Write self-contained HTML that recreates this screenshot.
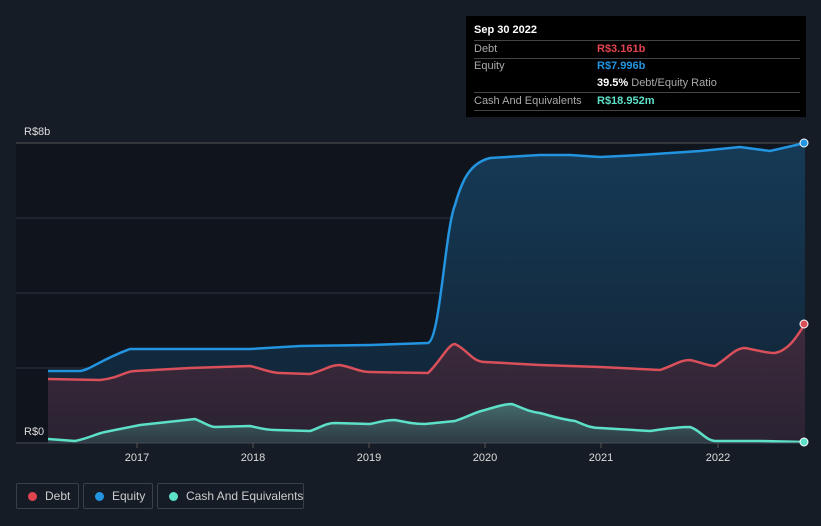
<!DOCTYPE html><html><head><style>
body{margin:0;width:821px;height:526px;background:#161c26;font-family:"Liberation Sans",sans-serif;overflow:hidden;position:relative}
.tip{position:absolute;left:466px;top:16px;width:340px;height:101px;background:#000;color:#fff;font-size:11px}
.tip .r{position:absolute;left:8px;width:326px;border-bottom:1px solid #444;height:17px;line-height:17px;color:#aaa}
.tip span{position:absolute;left:123px;font-weight:bold}
.leg{position:absolute;top:483px;height:26px;border:1px solid #3a404a;border-radius:2px;color:#ccc;font-size:12px;line-height:25px;box-sizing:border-box;white-space:nowrap;overflow:hidden}
.leg i{display:inline-block;width:9px;height:9px;border-radius:50%;margin:0 8px 0 11px;vertical-align:-1px}
</style></head><body>
<svg width="821" height="526" style="position:absolute;left:0;top:0">
<defs>
<linearGradient id="eq" x1="0" y1="0" x2="0" y2="1"><stop offset="0" stop-color="#163a56"/><stop offset="1" stop-color="#112233"/></linearGradient>
<linearGradient id="db" x1="0" y1="0" x2="0" y2="1"><stop offset="0" stop-color="#3e2b3d"/><stop offset="1" stop-color="#2a2232"/></linearGradient>
<linearGradient id="cs" x1="0" y1="0" x2="0" y2="1"><stop offset="0" stop-color="#446a6a"/><stop offset="1" stop-color="#2e3a44"/></linearGradient>
</defs>
<rect x="16" y="143" width="789" height="300" fill="#10141c"/>
<g stroke="#2c3440" stroke-width="1"><line x1="16" y1="143" x2="805" y2="143" stroke="#555"/><line x1="16" y1="218" x2="805" y2="218"/><line x1="16" y1="293" x2="805" y2="293"/><line x1="16" y1="368" x2="805" y2="368"/></g>
<path d="M48,371 L80,371 C90,370 100,360 130,349 L190,349 L250,349 L300,346 L370,345 L428,343 C440,340 445,230 455,205 C462,180 470,163 490,158 L540,155 L570,155 L600,157 L640,155 L700,151 L740,147 L770,151 L805,143 L805,443 L48,443Z" fill="url(#eq)"/>
<path d="M48,379 L100,380 C120,378 125,371 135,371 L190,368 L250,366 C260,368 270,373 280,373 L310,374 C325,370 330,365 340,365 C355,368 360,372 370,372 L428,373 C440,362 448,344 455,344 C468,350 472,362 485,362 L540,365 L600,367 L660,370 C675,365 680,360 690,360 C700,362 708,366 715,366 C728,358 735,348 745,348 C757,350 765,353 775,353 C790,350 798,334 805,324 L805,443 L48,443Z" fill="url(#db)"/>
<path d="M48,439 L75,441 C90,438 95,434 105,432 L140,425 L195,419 C205,423 210,427 215,427 L250,426 C260,428 265,430 275,430 L310,431 C320,428 325,423 335,423 L370,424 C380,422 385,420 395,420 C410,423 415,424 425,424 L455,421 C470,416 475,412 485,410 C495,407 505,404 512,404 C525,409 530,412 540,413 C555,417 560,419 575,421 C585,425 590,428 600,428 L650,431 C665,429 675,427 690,427 C700,430 705,440 715,441 L760,441 L805,442 L805,443 L48,443Z" fill="url(#cs)"/>
<g fill="none" stroke-width="2.5">
<path d="M48,371 L80,371 C90,370 100,360 130,349 L190,349 L250,349 L300,346 L370,345 L428,343 C440,340 445,230 455,205 C462,180 470,163 490,158 L540,155 L570,155 L600,157 L640,155 L700,151 L740,147 L770,151 L805,143" stroke="#2394df"/>
<path d="M48,379 L100,380 C120,378 125,371 135,371 L190,368 L250,366 C260,368 270,373 280,373 L310,374 C325,370 330,365 340,365 C355,368 360,372 370,372 L428,373 C440,362 448,344 455,344 C468,350 472,362 485,362 L540,365 L600,367 L660,370 C675,365 680,360 690,360 C700,362 708,366 715,366 C728,358 735,348 745,348 C757,350 765,353 775,353 C790,350 798,334 805,324" stroke="#d9505a"/>
<path d="M48,439 L75,441 C90,438 95,434 105,432 L140,425 L195,419 C205,423 210,427 215,427 L250,426 C260,428 265,430 275,430 L310,431 C320,428 325,423 335,423 L370,424 C380,422 385,420 395,420 C410,423 415,424 425,424 L455,421 C470,416 475,412 485,410 C495,407 505,404 512,404 C525,409 530,412 540,413 C555,417 560,419 575,421 C585,425 590,428 600,428 L650,431 C665,429 675,427 690,427 C700,430 705,440 715,441 L760,441 L805,442" stroke="#5de0c8"/>
</g>
<line x1="16" y1="443" x2="805" y2="443" stroke="#444c58"/>
<g stroke="#555"><line x1="137" y1="443" x2="137" y2="448"/><line x1="253" y1="443" x2="253" y2="448"/><line x1="369" y1="443" x2="369" y2="448"/><line x1="485" y1="443" x2="485" y2="448"/><line x1="601" y1="443" x2="601" y2="448"/><line x1="718" y1="443" x2="718" y2="448"/></g>
<circle cx="804" cy="143" r="4" fill="#2394df" stroke="#fff"/><circle cx="804" cy="324" r="4" fill="#d9505a" stroke="#fff"/><circle cx="804" cy="442" r="4" fill="#5de0c8" stroke="#fff"/>
<g fill="#ddd" font-size="11" font-family="Liberation Sans"><text x="24" y="135">R$8b</text><text x="24" y="435">R$0</text>
<g text-anchor="middle"><text x="137" y="461">2017</text><text x="253" y="461">2018</text><text x="369" y="461">2019</text><text x="485" y="461">2020</text><text x="601" y="461">2021</text><text x="718" y="461">2022</text></g></g>
</svg>
<div class="tip">
<div style="position:absolute;left:8px;top:8px;font-weight:bold;font-size:11px">Sep 30 2022</div>
<div class="r" style="top:24px;border-top:1px solid #444">Debt<span style="color:#e0444e">R$3.161b</span></div>
<div class="r" style="top:42px;border:none">Equity<span style="color:#2394df">R$7.996b</span></div>
<div class="r" style="top:59px"><span style="color:#fff">39.5% <b style="color:#aaa;font-weight:normal">Debt/Equity Ratio</b></span></div>
<div class="r" style="top:77px">Cash And Equivalents<span style="color:#5de0c8">R$18.952m</span></div>
</div>
<div class="leg" style="left:16px;width:63px"><i style="background:#e0444e"></i>Debt</div>
<div class="leg" style="left:83px;width:70px"><i style="background:#2394df"></i>Equity</div>
<div class="leg" style="left:157px;width:147px"><i style="background:#5de0c8"></i>Cash And Equivalents</div>
</body></html>
